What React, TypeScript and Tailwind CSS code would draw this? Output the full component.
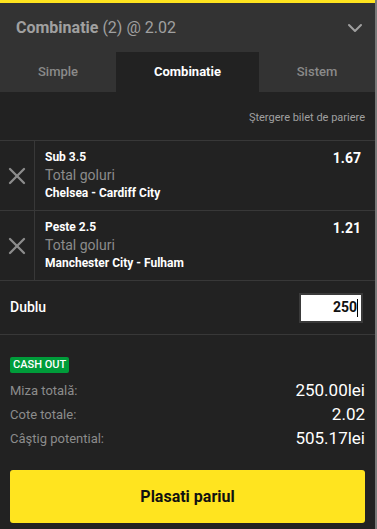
import { X, ChevronDown } from "lucide-react";

const bets = [
  { pick: "Sub 3.5", market: "Total goluri", match: "Chelsea - Cardiff City", odd: "1.67" },
  { pick: "Peste 2.5", market: "Total goluri", match: "Manchester City - Fulham", odd: "1.21" },
];

const totals = [
  { label: "Miza totală:", value: "250.00lei" },
  { label: "Cote totale:", value: "2.02" },
  { label: "Câştig potential:", value: "505.17lei" },
];

function App() {
  return (
    <div
      className="flex w-[377px] h-[529px] bg-[#222222] overflow-hidden"
      style={{ fontFamily: "Roboto, 'Liberation Sans', sans-serif" }}
    >
      <div className="flex flex-col w-[375px]">
        {/* Header */}
        <div className="h-[3px] bg-[#ffe41f]" />
        <div className="flex items-center justify-between h-[49px] bg-[#333333] pl-4 pr-[8px]">
          <p className="text-[16px] text-[#a0a0a0]">
            <span className="font-bold">Combinatie</span>
            <span> (2) @ 2.02</span>
          </p>
          <ChevronDown className="w-6 h-6 text-[#a0a0a0]" strokeWidth={2} />
        </div>

        {/* Tabs */}
        <div className="flex h-10 bg-[#333333] text-[13px] font-medium">
          <div className="flex w-[116px] items-center justify-center text-[#8a8a8a]">Simple</div>
          <div className="flex w-[143px] items-center justify-center bg-[#222222] text-white font-bold">
            Combinatie
          </div>
          <div className="flex w-[116px] items-center justify-center text-[#8a8a8a]">Sistem</div>
        </div>

        <div className="flex justify-end h-12 items-center pr-[10px] pt-1 text-[11px] text-[#a0a0a0]">
          Ştergere bilet de pariere
        </div>

        {/* Bets */}
        <div className="border-t border-[#383838]">
          {bets.map((b) => (
            <div key={b.match} className="flex h-[70px] border-b border-[#383838]">
              <div className="flex w-[35px] items-center justify-center border-r border-[#383838]">
                <X className="w-[28px] h-[28px] text-[#8c8c8c]" strokeWidth={2} />
              </div>
              <div className="flex flex-1 justify-between pl-[10px] pr-[14px] pt-[8px]">
                <div className="flex flex-col">
                  <span className="text-[12px] font-bold text-white leading-[16px]">{b.pick}</span>
                  <span className="text-[14px] text-[#8c8c8c] leading-[20px]">{b.market}</span>
                  <span className="text-[12px] font-bold text-white leading-[16px]">{b.match}</span>
                </div>
                <span className="text-[14px] font-bold text-white leading-[18px]">{b.odd}</span>
              </div>
            </div>
          ))}
        </div>

        {/* Stake */}
        <div className="flex items-center justify-between h-[54px] pl-[10px] pr-[12px] border-b border-[#383838]">
          <span className="text-[14px] font-medium text-white">Dublu</span>
          <div className="flex items-center justify-end w-[64px] h-[30px] bg-white border-2 border-[#3a3a3a] pr-[3px]">
            <span className="text-[14px] font-bold text-[#111111]">250</span>
            <span className="w-px h-[18px] bg-black" />
          </div>
        </div>

        {/* Summary */}
        <div className="flex flex-col px-[10px] pt-[22px]">
          <span className="self-start rounded-[2px] bg-[#009c3a] px-[3px] py-[1px] text-[11px] font-medium leading-[14px] text-white">
            CASH OUT
          </span>
          <div className="flex flex-col mt-[6px]">
            {totals.map((t) => (
              <div key={t.label} className="flex items-center justify-between h-6">
                <span className="text-[13px] text-[#8c8c8c]">{t.label}</span>
                <span className="text-[17px] text-white">{t.value}</span>
              </div>
            ))}
          </div>
          <button className="mt-[19px] h-[53px] w-full rounded-[3px] bg-[#ffe41f] text-[16px] font-bold text-[#111111]">
            Plasati pariul
          </button>
        </div>
      </div>
      <div className="w-[2px] bg-[#7a7a7a]" />
    </div>
  );
}

export default App;
